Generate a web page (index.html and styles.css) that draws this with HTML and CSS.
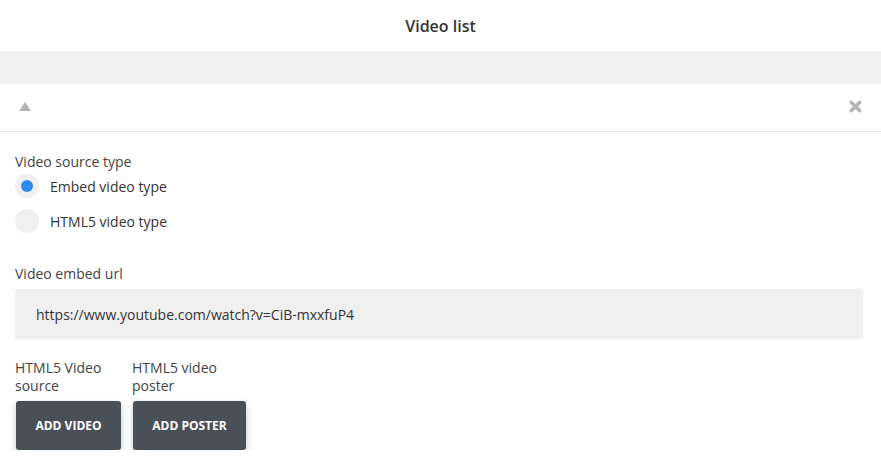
FILE: index.html
```html
<!DOCTYPE html>
<html>
<head>
<meta charset="utf-8">
<link rel="stylesheet" href="styles.css">
</head>
<body>
<header class="topbar">Video list</header>
<div class="band"></div>
<section class="panel">
  <div class="panel-head">
    <span class="tri"></span>
    <svg class="close" width="13" height="13" viewBox="0 0 13 13"><path d="M2.2 2.2 L10.8 10.8 M10.8 2.2 L2.2 10.8" stroke="#b4b4b4" stroke-width="3.4" stroke-linecap="round"/></svg>
  </div>
  <div class="panel-body">
    <div class="label">Video source type</div>
    <div class="radios">
      <label class="radio"><span class="dot on"></span>Embed video type</label>
      <label class="radio"><span class="dot"></span>HTML5 video type</label>
    </div>
    <div class="label url-label">Video embed url</div>
    <div class="input">https://www.youtube.com/watch?v=CiB-mxxfuP4</div>
    <div class="uploads">
      <div class="upload">
        <div class="up-label">HTML5 Video source</div>
        <button class="btn w1">ADD VIDEO</button>
      </div>
      <div class="upload">
        <div class="up-label">HTML5 video poster</div>
        <button class="btn w2">ADD POSTER</button>
      </div>
    </div>
  </div>
</section>
</body>
</html>
```

FILE: styles.css
```css
html, body {
  margin: 0;
  padding: 0;
  background: #fff;
  font-family: "Open Sans", "Noto Sans", sans-serif;
  color: #444;
}
.topbar {
  height: 52px;
  border-bottom: 1px solid #e6e6e6;
  display: flex;
  align-items: center;
  justify-content: center;
  font-size: 16px;
  font-weight: 600;
  color: #333;
  padding-left: 0;
}
.band {
  height: 31px;
  background: #f0f0f0;
}
.panel-head {
  height: 47px;
  border-bottom: 1px solid #e6e6e6;
  display: flex;
  align-items: center;
  justify-content: space-between;
  padding: 0 19px 0 19px;
}
.tri {
  width: 0;
  height: 0;
  border-left: 6px solid transparent;
  border-right: 6px solid transparent;
  border-bottom: 9px solid #b4b4b4;
  margin-top: -2px;
}
.close {
  display: block;
  margin-top: -3px;
}
.panel-body {
  padding: 20px 18px 0 15px;
}
.label {
  font-size: 14px;
  line-height: 19px;
  color: #444;
}
.radios {
  display: flex;
  flex-direction: column;
  gap: 11px;
  margin-top: 3px;
}
.radio {
  display: flex;
  align-items: center;
  gap: 11px;
  font-size: 14px;
  color: #333;
  height: 24px;
}
.dot {
  width: 24px;
  height: 24px;
  border-radius: 50%;
  background: #f0f0f0;
  display: flex;
  align-items: center;
  justify-content: center;
}
.dot.on::after {
  content: "";
  width: 12px;
  height: 12px;
  border-radius: 50%;
  background: #2d8cf0;
}
.url-label {
  margin-top: 31px;
}
.input {
  margin-top: 6px;
  height: 50px;
  background: #f0f0f0;
  border-radius: 2px;
  display: flex;
  align-items: center;
  padding-left: 21px;
  font-size: 14px;
  color: #333;
}
.uploads {
  display: flex;
  gap: 11px;
  margin-top: 20px;
}
.upload {
  display: flex;
  flex-direction: column;
}
.up-label {
  font-size: 14px;
  line-height: 18px;
  color: #444;
  width: 100px;
}
.btn {
  margin-top: 6px;
  height: 49px;
  border: 0;
  border-radius: 3px;
  background: #4a5058;
  color: #fff;
  font-family: "Open Sans", "Noto Sans", sans-serif;
  font-weight: 700;
  font-size: 12px;
  box-shadow: 0 3px 7px rgba(0, 0, 0, 0.22);
  margin-left: 1px;
  padding: 0;
}
.w1 { width: 105px; }
.w2 { width: 113px; }
```
